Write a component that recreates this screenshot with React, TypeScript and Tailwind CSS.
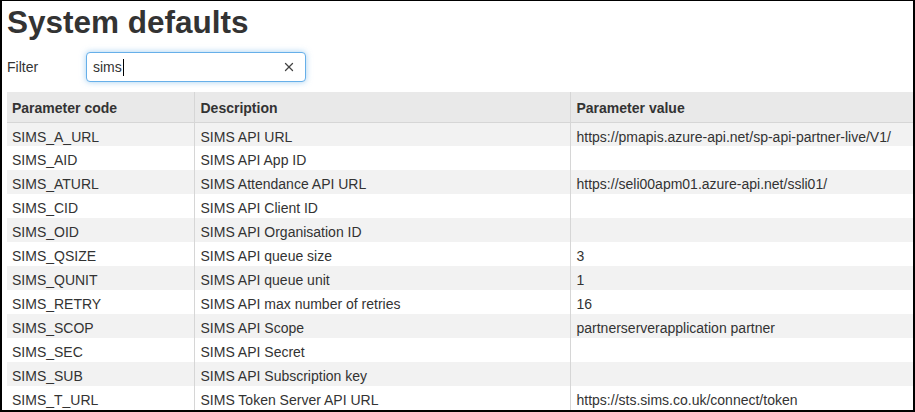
import React from 'react';
import { X } from 'lucide-react';

const rows: [string, string, string][] = [
  ['SIMS_A_URL', 'SIMS API URL', 'https://pmapis.azure-api.net/sp-api-partner-live/V1/'],
  ['SIMS_AID', 'SIMS API App ID', ''],
  ['SIMS_ATURL', 'SIMS Attendance API URL', 'https://seli00apm01.azure-api.net/ssli01/'],
  ['SIMS_CID', 'SIMS API Client ID', ''],
  ['SIMS_OID', 'SIMS API Organisation ID', ''],
  ['SIMS_QSIZE', 'SIMS API queue size', '3'],
  ['SIMS_QUNIT', 'SIMS API queue unit', '1'],
  ['SIMS_RETRY', 'SIMS API max number of retries', '16'],
  ['SIMS_SCOP', 'SIMS API Scope', 'partnerserverapplication partner'],
  ['SIMS_SEC', 'SIMS API Secret', ''],
  ['SIMS_SUB', 'SIMS API Subscription key', ''],
  ['SIMS_T_URL', 'SIMS Token Server API URL', 'https://sts.sims.co.uk/connect/token'],
];

const App = () => {
  return (
    <div
      className="w-[915px] h-[412px] overflow-hidden bg-white border-black border-t border-l-2 border-r-2 border-b-2 pl-[5px] text-[#333]"
      style={{ fontFamily: '"Liberation Sans", Arial, sans-serif' }}
    >
      <h1 className="text-[31.5px] font-bold leading-[36px] mt-[3px]">System defaults</h1>

      <div className="flex items-center mt-[12px] text-[14px]">
        <label className="w-[79px]">Filter</label>
        <div className="w-[220px] h-[30px] flex items-center justify-between rounded-[4px] border border-[#66afe9] shadow-[0_0_6px_rgba(102,175,233,0.6)] pl-[6px] pr-[9px] bg-white">
          <span className="flex items-center">
            sims
            <span className="inline-block w-px h-[17px] bg-black ml-px" />
          </span>
          <X size={14} strokeWidth={2.2} className="text-[#444]" />
        </div>
      </div>

      <table className="mt-[10px] w-full table-fixed border-collapse text-[14px] leading-[16px]">
        <colgroup>
          <col className="w-[187px]" />
          <col className="w-[376px]" />
          <col />
        </colgroup>
        <thead>
          <tr className="bg-[#e9e9e9] h-[30px] border-b border-[#d6d6d6]">
            <th className="text-left font-bold px-[5px] pt-[2px]">Parameter code</th>
            <th className="text-left font-bold px-[6px] pt-[2px] border-l border-[#d6d6d6]">Description</th>
            <th className="text-left font-bold px-[6px] pt-[2px] border-l border-[#d6d6d6]">Parameter value</th>
          </tr>
        </thead>
        <tbody>
          {rows.map(([code, desc, value], i) => (
            <tr key={code} className={i % 2 === 0 ? 'bg-[#f2f2f2] h-[24px]' : 'bg-white h-[24px]'}>
              <td className="px-[5px] pt-[6px] align-top whitespace-nowrap">{code}</td>
              <td className="px-[6px] pt-[6px] align-top whitespace-nowrap border-l border-[#d6d6d6]">{desc}</td>
              <td className="px-[6px] pt-[6px] align-top whitespace-nowrap border-l border-[#d6d6d6]">{value}</td>
            </tr>
          ))}
        </tbody>
      </table>
    </div>
  );
};

export default App;
